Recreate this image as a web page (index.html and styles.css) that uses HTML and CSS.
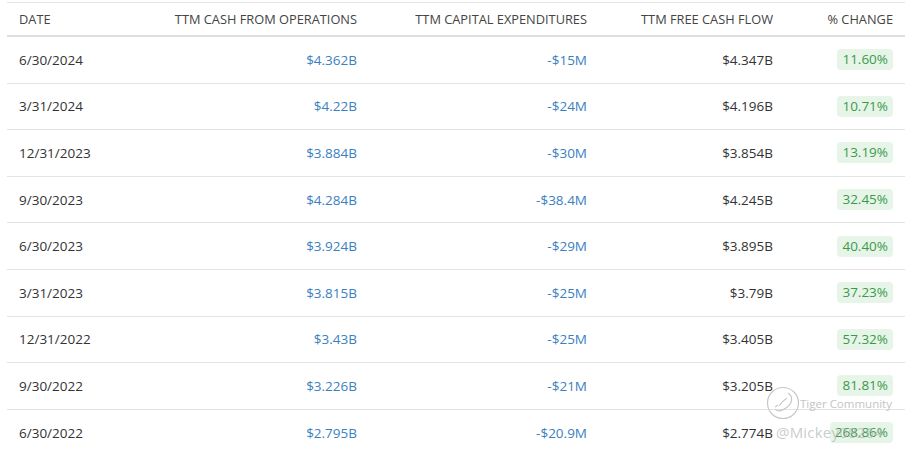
FILE: index.html
```html
<!DOCTYPE html>
<html>
<head>
<meta charset="utf-8">
<link rel="stylesheet" href="styles.css">
</head>
<body>
<div class="page">
  <div class="table">
    <div class="row head">
      <div class="c left">DATE</div>
      <div class="c">TTM CASH FROM OPERATIONS</div>
      <div class="c">TTM CAPITAL EXPENDITURES</div>
      <div class="c">TTM FREE CASH FLOW</div>
      <div class="c">% CHANGE</div>
    </div>
    <div class="row"><div class="c left">6/30/2024</div><div class="c blue">$4.362B</div><div class="c blue">-$15M</div><div class="c">$4.347B</div><div class="c"><span class="badge">11.60%</span></div></div>
    <div class="row"><div class="c left">3/31/2024</div><div class="c blue">$4.22B</div><div class="c blue">-$24M</div><div class="c">$4.196B</div><div class="c"><span class="badge">10.71%</span></div></div>
    <div class="row"><div class="c left">12/31/2023</div><div class="c blue">$3.884B</div><div class="c blue">-$30M</div><div class="c">$3.854B</div><div class="c"><span class="badge">13.19%</span></div></div>
    <div class="row"><div class="c left">9/30/2023</div><div class="c blue">$4.284B</div><div class="c blue">-$38.4M</div><div class="c">$4.245B</div><div class="c"><span class="badge">32.45%</span></div></div>
    <div class="row"><div class="c left">6/30/2023</div><div class="c blue">$3.924B</div><div class="c blue">-$29M</div><div class="c">$3.895B</div><div class="c"><span class="badge">40.40%</span></div></div>
    <div class="row"><div class="c left">3/31/2023</div><div class="c blue">$3.815B</div><div class="c blue">-$25M</div><div class="c">$3.79B</div><div class="c"><span class="badge">37.23%</span></div></div>
    <div class="row"><div class="c left">12/31/2022</div><div class="c blue">$3.43B</div><div class="c blue">-$25M</div><div class="c">$3.405B</div><div class="c"><span class="badge">57.32%</span></div></div>
    <div class="row"><div class="c left">9/30/2022</div><div class="c blue">$3.226B</div><div class="c blue">-$21M</div><div class="c">$3.205B</div><div class="c"><span class="badge">81.81%</span></div></div>
    <div class="row last"><div class="c left">6/30/2022</div><div class="c blue">$2.795B</div><div class="c blue">-$20.9M</div><div class="c">$2.774B</div><div class="c"><span class="badge">268.86%</span></div></div>
  </div>
  <div class="watermark">
    <svg class="wm-logo" width="34" height="34" viewBox="0 0 34 34">
      <circle cx="17" cy="17" r="15.5" fill="none" stroke="#c8c8c8" stroke-width="1.2"/>
      <path d="M22 7 C28 11 26 18 20 22 C16 25 11 26 9 23" fill="none" stroke="#c8c8c8" stroke-width="1.3"/>
      <path d="M13 20 C15 17 18 14 21 12" fill="none" stroke="#c8c8c8" stroke-width="1.1"/>
      <path d="M9 21 L12 19" fill="none" stroke="#c8c8c8" stroke-width="1.1"/>
    </svg>
    <span class="wm-title">Tiger Community</span>
    <span class="wm-user">@Mickey08264</span>
  </div>
</div>
</body>
</html>
```
FILE: styles.css
```css
html, body {
  margin: 0;
  padding: 0;
  background: #ffffff;
}
.page {
  position: relative;
  padding: 2px 7px 0 7px;
  font-family: "Open Sans", "Noto Sans", sans-serif;
}
.table {
  width: 898px;
  border-top: 1px solid #e6e6e6;
}
.row {
  display: grid;
  grid-template-columns: 142px 220px 230px 186px 120px;
  align-items: center;
  height: 45.6px;
  border-bottom: 1px solid #e3e3e3;
  font-size: 13.5px;
  color: #333333;
}
.row.last {
  border-bottom: none;
}
.row.head {
  height: 32px;
  border-bottom: 2px solid #dedede;
  font-size: 12.8px;
  color: #444444;
}
.c {
  padding: 0 12px;
  text-align: right;
  white-space: nowrap;
}
.c.left {
  text-align: left;
}
.blue {
  color: #3a7fc0;
}
.badge {
  display: inline-block;
  background: #e7f5e8;
  color: #3a9a4c;
  border-radius: 4px;
  padding: 1px 5px 2px 5px;
  line-height: 18px;
}
.watermark {
  position: absolute;
  left: 766px;
  top: 386px;
  width: 140px;
  height: 62px;
  pointer-events: none;
}
.wm-logo {
  position: absolute;
  left: 0;
  top: 0;
}
.wm-title {
  position: absolute;
  left: 34px;
  top: 10px;
  font-family: "Open Sans", sans-serif;
  font-size: 11.5px;
  color: #c4c4c4;
}
.wm-user {
  position: absolute;
  left: 10px;
  top: 36px;
  font-family: "Open Sans", sans-serif;
  font-size: 15px;
  color: rgba(180, 180, 180, 0.7);
  letter-spacing: 0.2px;
}
```
